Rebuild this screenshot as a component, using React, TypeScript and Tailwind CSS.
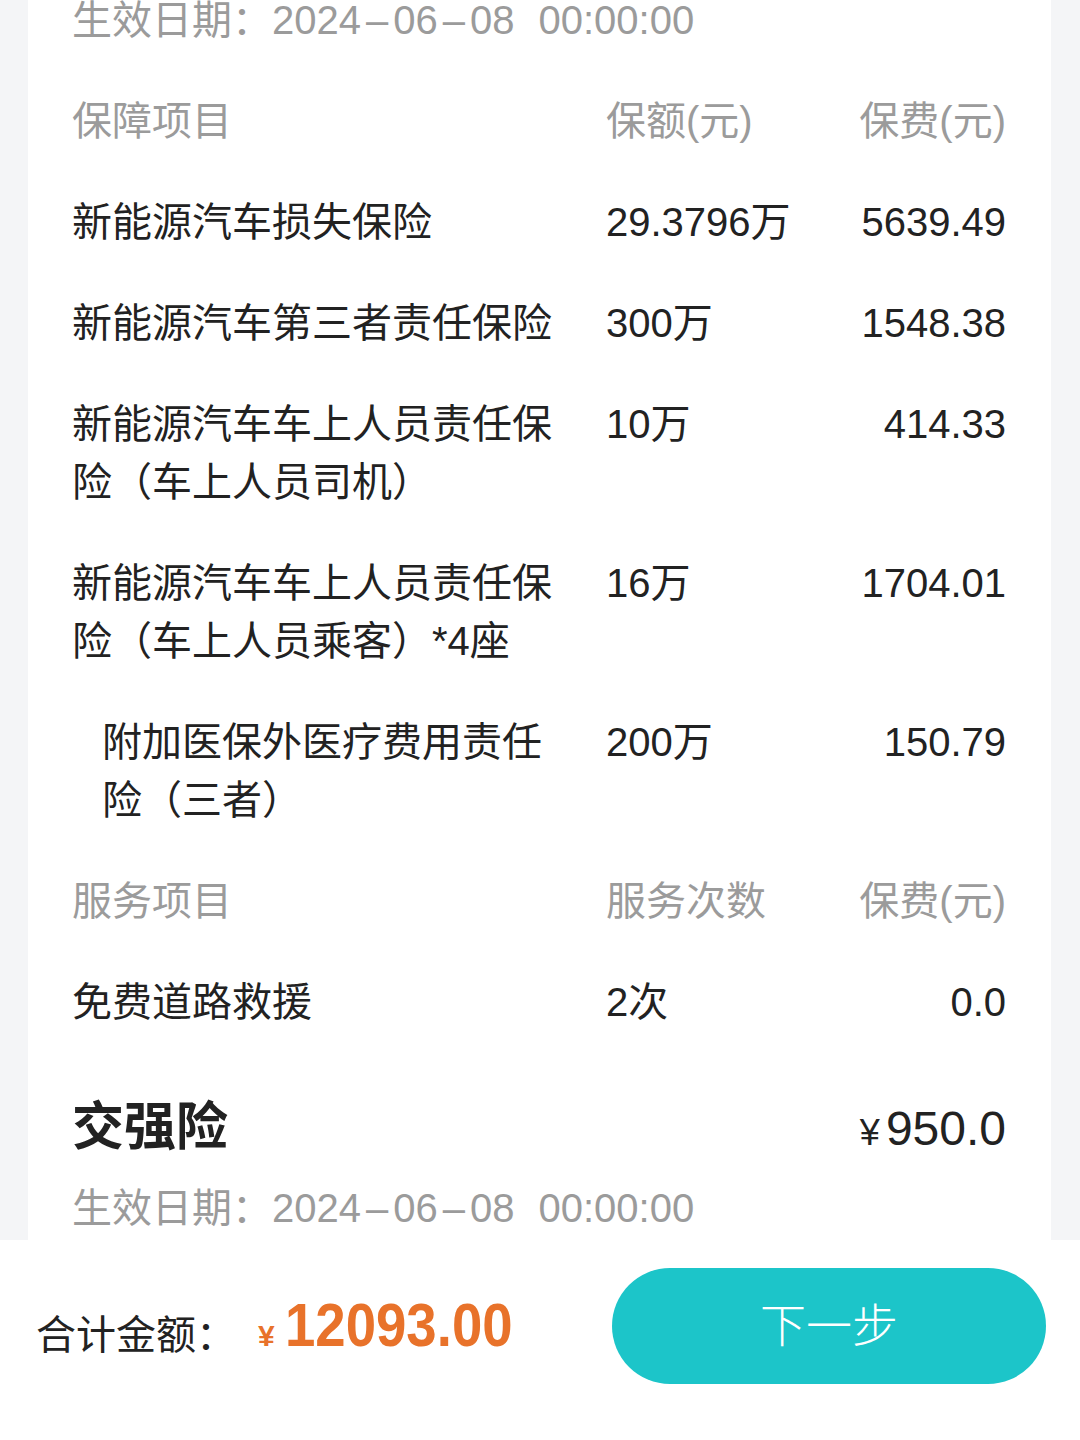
import React from "react";

const FONT = '"Liberation Sans", "Noto Sans CJK SC", sans-serif';

type Row = { name: string; amount: string; fee: string; indent?: boolean; header?: boolean };

const rows: Row[] = [
  { name: "保障项目", amount: "保额(元)", fee: "保费(元)", header: true },
  { name: "新能源汽车损失保险", amount: "29.3796万", fee: "5639.49" },
  { name: "新能源汽车第三者责任保险", amount: "300万", fee: "1548.38" },
  { name: "新能源汽车车上人员责任保险（车上人员司机）", amount: "10万", fee: "414.33" },
  { name: "新能源汽车车上人员责任保险（车上人员乘客）*4座", amount: "16万", fee: "1704.01" },
  { name: "附加医保外医疗费用责任险（三者）", amount: "200万", fee: "150.79", indent: true },
  { name: "服务项目", amount: "服务次数", fee: "保费(元)", header: true },
  { name: "免费道路救援", amount: "2次", fee: "0.0" },
];

function TableRow({ r }: { r: Row }) {
  const color = r.header ? "text-[#9b9b9b]" : "text-[#222222]";
  return (
    <div className={`grid grid-cols-[534px_220px_1fr] pt-[21px] pb-[22px] text-[40px] leading-[58px] ${color}`}>
      <div className={r.indent ? "pl-[30px] pr-[34px]" : "pr-[34px]"}>{r.name}</div>
      <div className="whitespace-nowrap">{r.amount}</div>
      <div className="text-right whitespace-nowrap">{r.fee}</div>
    </div>
  );
}

function DateText() {
  return (
    <span className="whitespace-nowrap">
      生效日期：2024<span className="mx-[5px]">–</span>06<span className="mx-[5px]">–</span>08
      <span className="inline-block w-[24px]"></span>00:00:00
    </span>
  );
}

export default function App() {
  return (
    <div className="w-[1080px] h-[1440px] bg-[#f4f5f7] flex flex-col overflow-hidden" style={{ fontFamily: FONT }}>
      <div className="h-[1240px] overflow-hidden">
        <div className="ml-[28px] mr-[29px] h-full bg-white pl-[44px] pr-[45px] flex flex-col">
          <div className="mt-[-30px]">
            <div className="pt-[21px] pb-[22px] text-[40px] leading-[58px] text-[#9b9b9b]">
              <DateText />
            </div>
            {rows.map((r, i) => (
              <TableRow key={i} r={r} />
            ))}
            <div className="flex justify-between items-baseline pt-[46px] leading-[56px] text-[#222222]">
              <div className="text-[52px] font-bold">交强险</div>
              <div className="flex items-baseline">
                <span className="text-[36px] mr-[6px]">¥</span>
                <span className="text-[48px]">950.0</span>
              </div>
            </div>
            <div className="pt-[18px] text-[40px] leading-[58px] text-[#9b9b9b]">
              <DateText />
            </div>
          </div>
        </div>
      </div>
      <div className="flex-1 bg-white flex items-start pt-[28px]">
        <div className="flex items-center h-[116px] w-full">
          <div className="ml-[36px] text-[40px] text-[#222222] leading-none pt-[18px]">合计金额：</div>
          <div className="ml-[22px] flex items-baseline text-[#e8722a] font-bold">
            <span className="text-[30px] mr-[10px]">¥</span>
            <span className="inline-block text-[62px] leading-none origin-left scale-x-[0.88] w-[222px] whitespace-nowrap">
              12093.00
            </span>
          </div>
          <button className="ml-auto mr-[34px] w-[434px] h-[116px] rounded-full bg-[#1cc5c9] text-white text-[46px] font-light flex items-center justify-center">
            下一步
          </button>
        </div>
      </div>
    </div>
  );
}
